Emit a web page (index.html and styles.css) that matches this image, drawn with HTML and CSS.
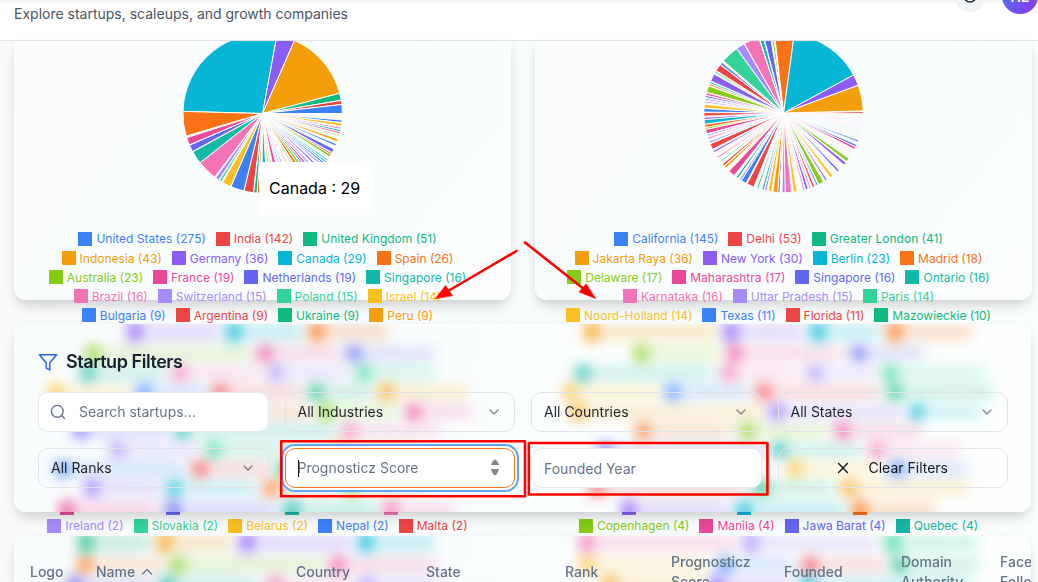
FILE: index.html
```html
<!DOCTYPE html>
<html lang="en">
<head>
<meta charset="utf-8">
<title>Startups</title>
<link rel="stylesheet" href="styles.css">
</head>
<body>
<header class="header">
  <p class="subtitle">Explore startups, scaleups, and growth companies</p>
  <div class="header-actions">
    <div class="round-button"><svg width="16" height="16" viewBox="0 0 16 16"><circle cx="8" cy="8" r="6" fill="none" stroke="#1f2937" stroke-width="1.6"/></svg></div>
    <div class="avatar">HE</div>
  </div>
</header>
<main class="main">
  <section class="charts">
    <article class="card chart-card">
      <svg class="pie" id="pie-countries" width="162" height="154" viewBox="182 41 162 154"></svg>
      <div class="tooltip">Canada : 29</div>
      <div class="legend" id="legend-countries"></div>
    </article>
    <article class="card chart-card">
      <svg class="pie" id="pie-states" width="162" height="154" viewBox="703 41 162 154"></svg>
      <div class="legend" id="legend-states"></div>
    </article>
  </section>
  <section class="card filters">
    <svg class="glass" id="glass-filters" width="1017" height="188" viewBox="14 324 1017 188"></svg>
    <h2 class="filters-title">
      <svg width="20" height="20" viewBox="0 0 20 20" fill="none" stroke="#2563eb" stroke-width="1.5" stroke-linejoin="round"><path d="M1.4 2.7h17.2l-6.8 8.1v7.1l-3.6-1.8v-5.3z"/></svg>
      <span>Startup Filters</span>
    </h2>
    <div class="filter-grid">
      <div class="field solid search">
        <svg width="16" height="16" viewBox="0 0 16 16" fill="none" stroke="#64748b" stroke-width="1.4" stroke-linecap="round"><circle cx="7.3" cy="7.3" r="5.9"/><path d="m11.6 11.6 2.9 2.9"/></svg>
        <span>Search startups...</span>
      </div>
      <div class="field"><span>All Industries</span><svg class="chevron" viewBox="0 0 16 16"><path d="m4 6 4 4 4-4"/></svg></div>
      <div class="field"><span>All Countries</span><svg class="chevron" viewBox="0 0 16 16"><path d="m4 6 4 4 4-4"/></svg></div>
      <div class="field"><span>All States</span><svg class="chevron" viewBox="0 0 16 16"><path d="m4 6 4 4 4-4"/></svg></div>
      <div class="field"><span>All Ranks</span><svg class="chevron" viewBox="0 0 16 16"><path d="m4 6 4 4 4-4"/></svg></div>
      <div class="field solid focused">
        <i class="caret"></i><span class="score">Prognosticz Score</span>
        <svg class="spinner" width="14" height="20" viewBox="0 0 14 20"><path fill="#858585" d="M7 1.300c1.700 1.200 3.400 3.200 4 5.700H3c.6-2.500 2.300-4.500 4-5.700zM3 11h8c-.6 2.900-2 4.700-3 6H6c-1-1.300-2.400-3.100-3-6z"/></svg>
      </div>
      <div class="field solid year"><span>Founded Year</span></div>
      <div class="field clear"><svg width="16" height="16" viewBox="0 0 16 16" fill="none" stroke="#111827" stroke-width="1.4" stroke-linecap="round"><path d="m3.600 3.600 8.800 8.800M12.400 3.600 3.600 12.400"/></svg><span>Clear Filters</span></div>
    </div>
  </section>
  <section class="card table-card">
    <svg class="glass" id="glass-table" width="1017" height="46" viewBox="14 536 1017 46"></svg>
    <div class="table-head">
      <div>Logo</div>
      <div>Name <svg width="12" height="12" viewBox="0 0 12 12" fill="none" stroke="#64748b" stroke-width="1.300" stroke-linecap="round" stroke-linejoin="round"><path d="m1.500 8 4.500-4.500L10.500 8"/></svg></div>
      <div>Country</div>
      <div>State</div>
      <div>Rank</div>
      <div>Prognosticz<br>Score</div>
      <div>Founded</div>
      <div>Domain<br>Authority</div>
      <div>Face<br>Follo</div>
    </div>
  </section>
</main>
<svg class="annotations" width="1038" height="582" viewBox="0 0 1038 582" fill="none" stroke="#ff0000" stroke-width="2.600" stroke-linejoin="round" stroke-linecap="round">
  <rect x="281.200" y="441.200" width="243.800" height="55"/>
  <rect x="528.800" y="443" width="238.600" height="51.500"/>
  <path d="M516.500 251 449 290.500M525 242.500 582 287.500"/>
  <path d="M435.500 298.500 445.500 285.500 452.500 295.500zM595.500 298.500 579 292 586 284z" fill="#ff0000" stroke-width=".6"/>
</svg>
<script src="script.js"></script>
</body>
</html>
```
FILE: styles.css
```css
* { box-sizing: border-box; }
html { overflow: hidden; }
body {
  margin: 0;
  width: 1038px;
  height: 582px;
  overflow: hidden;
  position: relative;
  font-family: Inter, "Liberation Sans", sans-serif;
  color: #1f2937;
  background: linear-gradient(90deg, #f8fafc 0%, #f9fcfc 55%, #fafefc 100%);
}
.header {
  height: 41px;
  background: linear-gradient(#f1f1f1, #ffffff 4px);
  border-bottom: 1px solid #e2e5e9;
  display: flex;
  justify-content: space-between;
  padding-left: 14px;
}
.subtitle {
  margin: 4px 0 0;
  font-size: 14px;
  line-height: 20px;
  color: #4b5563;
}
.header-actions { display: flex; gap: 16px; height: 36px; margin-top: -22px; }
.round-button {
  width: 32px; height: 32px; margin-top: 2px;
  border-radius: 50%;
  background: #f1f3f5;
  display: flex; align-items: center; justify-content: center;
}
.avatar {
  width: 36px; height: 36px;
  border-radius: 50%;
  background: linear-gradient(135deg, #3b82f6, #9333ea);
  color: #ffffff;
  font-size: 14px; font-weight: 600; line-height: 37px; text-align: center;
}
.main { padding: 0 7px 0 14px; }
.charts { display: grid; grid-template-columns: 497px 497px; grid-template-rows: 259px; gap: 24px; height: 259px; }
.card {
  position: relative;
  border-radius: 12px;
  background: linear-gradient(100deg, #f9fcfd, #fdfffe);
  box-shadow: 0 8px 14px -3px rgba(0, 0, 0, .16), 0 2px 10px rgba(0, 0, 0, .04);
}
.chart-card { border-radius: 0 0 12px 12px; background: linear-gradient(130deg, #fafbfd, #f9fdfd 60%, #fcfefe); }
.pie { display: block; margin-left: 168px; }
.tooltip {
  position: absolute;
  left: 245px; top: 121px;
  width: 111px; height: 53px;
  padding-left: 10px;
  background: #ffffff;
  color: #000000;
  font-size: 16px; line-height: 53px;
}
.legend { margin-top: 34.400px; width: 497px; margin-left: -5px; }
.legend-row { display: flex; justify-content: center; gap: 10px; height: 19.130px; align-items: center; }
.legend-item { display: flex; align-items: center; gap: 4px; font-size: 12px; line-height: 19px; white-space: nowrap; }
.swatch { width: 14px; height: 14px; background: currentColor; }
.legend-rest { display: block; margin-left: 5px; }
.glass { position: absolute; left: 0; top: 0; border-radius: inherit; overflow: hidden; }
.filters { height: 188px; margin-top: 24px; padding: 28px 24px 24px; }
.filters-title {
  position: relative;
  margin: 0 0 20px;
  height: 20px;
  display: flex; align-items: center; gap: 8px;
  font-size: 18px; font-weight: 600; letter-spacing: -.450px;
  color: #18212f;
}
.filters-title span { padding-bottom: 2px; }
.filter-grid { position: relative; display: grid; grid-template-columns: repeat(4, 1fr); gap: 16px; width: 970px; }
.field {
  height: 40px;
  border: 1px solid #e0e3ea;
  border-radius: 10px;
  padding: 0 12px;
  display: flex; align-items: center; justify-content: space-between;
  font-size: 14px;
  color: #1f2328;
}
.field span { padding-bottom: 2px; }
.solid { background: #ffffff; color: #64748b; border-color: #e2e8f0; justify-content: flex-start; }
.search { gap: 13px; padding-left: 11px; }
.chevron { width: 16px; height: 16px; fill: none; stroke: #7b8088; stroke-width: 1.300; stroke-linecap: round; stroke-linejoin: round; }
.focused { border-color: #f97316; box-shadow: 0 0 0 2px #ffffff, 0 0 0 4px #60a5fa; }
.caret { width: 1px; height: 17px; margin-right: -1px; background: #000000; }
.score { flex: 1; }
.year { padding-top: 2px; }
.clear { justify-content: center; gap: 17px; padding-right: 14px; color: #18181b; }
.table-card { height: 46px; margin-top: 24px; overflow: hidden; border-radius: 12px 12px 0 0; }
.table-head {
  position: relative;
  display: grid;
  grid-template-columns: 66px 200px 130px 139px 106px 113px 117px 99px 60px;
  align-items: center;
  height: 72px;
  padding-left: 16px;
  font-size: 14px; line-height: 20px; font-weight: 500; color: #64748b;
  white-space: nowrap;
}
.table-head svg { vertical-align: -1px; margin-left: 2px; }
.annotations { position: absolute; left: 0; top: 0; }
```
FILE: script.js
```js
const C = {
  blue: "#3b82f6", red: "#ef4444", green: "#10b981", amber: "#f59e0b",
  violet: "#8b5cf6", cyan: "#06b6d4", orange: "#f97316", lime: "#84cc16",
  pink: "#ec4899", indigo: "#6366f1", teal: "#14b8a6", rose: "#f472b6",
  lav: "#a78bfa", mint: "#34d399", gold: "#fbbf24"
};
const names = Object.keys(C);

/* Wide slices are [from, to, colour]; slivers are [middle, width, colour], clockwise from east. */
function drawPie(id, cx, cy, wide, thin, faint) {
  const r = 79.700;
  const pt = a => (cx + r * Math.cos(a * Math.PI / 180)).toFixed(2) + " " + (cy + r * Math.sin(a * Math.PI / 180)).toFixed(2);
  const wedge = (a, b, c, o, s) =>
    `<path d="M${cx} ${cy}L${pt(a)}A${r} ${r} 0 0 1 ${pt(b)}Z" fill="${C[c]}" opacity="${o}" stroke="#fff" stroke-width="${s}"/>`;
  let out = `<circle cx="${cx}" cy="${cy}" r="${r}" fill="#fff"/>`;
  faint.forEach(([from, to]) => {
    for (let a = from, i = 0; a < to; a += 1.3, i++) out += wedge(a, a + .5, names[(i * 4 + 3) % 15], .12, 0);
  });
  thin.forEach(([m, w, c]) => {
    out += wedge(m - w / 2 - .4, m + w / 2 + .4, c, 1, .9);
  });
  wide.forEach(([a, b, c]) => { out += wedge(a, b, c, 1, 1); });
  document.getElementById(id).innerHTML = out;
}
drawPie("pie-countries", 262.600, 113.500, [
  [181.500, 280.400, "cyan"], [280.400, 293.600, "violet"], [293.600, 345.300, "amber"], [345.300, 350.500, "green"],
  [350.500, 353.500, "red"], [353.500, 360, "blue"], [96.700, 103.600, "red"], [103.600, 113.500, "blue"],
  [113.500, 120.100, "gold"], [127, 141.800, "rose"], [141.800, 151.200, "teal"], [151.500, 156.500, "indigo"],
  [156.800, 162.300, "pink"], [163.600, 181.500, "orange"]
], [
  [5.600, 1, "blue"], [8, 1.500, "gold"], [10.700, .6, "rose"], [12.500, .8, "teal"], [14, .6, "pink"], [16, .2, "lime"],
  [19.700, 1.300, "amber"], [23.200, .8, "blue"], [27.900, 2.200, "indigo"], [30.500, .7, "pink"], [32, 1.200, "lime"],
  [35.800, .5, "mint"], [37.400, .4, "teal"], [39, .6, "blue"], [41, .6, "lav"], [44, .7, "indigo"], [47, .8, "lav"],
  [49.500, 1, "pink"], [51.500, .8, "blue"], [54, 1.500, "lime"], [56.800, 2, "orange"], [60, .6, "mint"],
  [64, .8, "gold"], [69, .8, "lav"], [72, .6, "blue"], [77, 3, "pink"], [81.800, .8, "lime"], [84, 1, "orange"],
  [88.500, 3, "cyan"], [93, 1, "orange"], [95.200, 1.500, "green"], [122, .9, "mint"], [124.700, 2, "lav"]
], [[1, 92]]);
drawPie("pie-states", 783.600, 113, [
  [263.400, 277.700, "orange"], [277.700, 331.500, "cyan"], [331.500, 339.600, "violet"], [339.600, 358.500, "amber"],
  [220.900, 233.900, "mint"], [234, 240.300, "lav"], [240.500, 251.700, "rose"], [252, 254.900, "teal"], [255.400, 260.200, "indigo"]
], [
  [359.700, .5, "red"], [20.600, .6, "blue"], [24.300, .9, "indigo"], [26.200, 1.100, "pink"], [36.200, 1.800, "lime"],
  [39.600, 1.500, "violet"], [46.700, .8, "indigo"], [53, 1.500, "gold"], [57.600, .6, "indigo"], [61.800, 3, "lime"],
  [65, .5, "blue"], [68, 1, "red"], [70.500, .5, "lav"], [73, 1.200, "violet"], [75.200, .5, "rose"], [81.600, 1.800, "gold"],
  [86.700, 4, "rose"], [90, 1.500, "lav"], [93.500, .8, "violet"], [96, 2.700, "amber"], [100, 1.800, "gold"],
  [103, .8, "lav"], [105, .8, "teal"], [109, .5, "green"], [114.600, 4.500, "red"], [120, 3, "blue"], [122.800, .6, "lav"],
  [125.700, .8, "green"], [130.700, 4, "pink"], [137, 1, "amber"], [139.300, .8, "red"], [142.500, .3, "mint"],
  [146, .4, "rose"], [151, .8, "violet"], [155, 3.500, "red"], [158.500, .4, "blue"], [161.500, .5, "rose"],
  [163.700, .4, "lav"], [166.500, 2.500, "pink"], [168.800, .6, "lime"], [170.700, 1.500, "orange"], [173.600, 2.500, "cyan"],
  [176.100, .8, "violet"], [179, 1.800, "red"], [182, 1.800, "blue"], [184.900, 2, "gold"], [188, .4, "lav"], [190, .3, "violet"],
  [192, .7, "indigo"], [193.800, .9, "pink"], [197.500, 4, "lime"], [201, .5, "orange"], [202.500, .5, "cyan"],
  [206.500, 4.700, "violet"], [211, .4, "mint"], [214.700, 4.300, "red"], [218.500, 1, "blue"], [261.800, .8, "lime"]
], [[1, 219]]);

const legendRow = items => `<div class="legend-row">${items.map(([t, c]) =>
  `<div class="legend-item" style="color:${C[c]}"><span class="swatch"></span><span>${t}</span></div>`).join("")}</div>`;

/* Each row: centre y, right end of the last label, then swatch centres with colours. */
const filterRows = [
  [334, 388, [135, "violet"], [234, "cyan"], [317, "orange"]],
  [353.500, 434, [93, "lime"], [265, "pink"], [354, "indigo"]],
  [373, 436, [88, "teal"], [180, "rose"], [276, "lav"], [364, "mint"]],
  [392, 468, [56, "gold"], [144, "blue"], [220, "red"], [316, "green"], [386, "amber"]],
  [412, 472, [60, "violet"], [150, "cyan"], [240, "orange"], [326, "lime"], [414, "pink"]],
  [431, 442, [81, "indigo"], [182, "teal"], [350, "rose"]],
  [450, 420, [118, "lav"], [214, "mint"], [338, "gold"]],
  [469, 440, [63, "blue"], [200, "red"], [285, "green"], [370, "amber"]],
  [488, 430, [92, "violet"], [174, "cyan"], [271, "orange"], [352, "lime"]],
  [508, 456, [67, "pink"], [173, "indigo"], [292, "teal"], [391, "rose"]],
  [334, 972, [592, "amber"], [731, "violet"], [818, "cyan"], [895, "orange"]],
  [353.500, 925, [641, "lime"], [735, "pink"], [859, "indigo"]],
  [373, 986, [583, "teal"], [729, "rose"], [815, "lav"], [890, "mint"]],
  [392, 994, [571, "gold"], [673, "blue"], [764, "red"], [895, "green"]],
  [412, 982, [578, "amber"], [777, "violet"], [917, "cyan"]],
  [431, 922, [643, "orange"], [747, "lime"], [843, "pink"]],
  [450, 962, [605, "indigo"], [780, "teal"], [877, "rose"]],
  [469, 968, [795, "gold"], [897, "blue"]],
  [488, 970, [597, "red"], [762, "green"], [849, "amber"]],
  [508, 936, [629, "violet"], [744, "cyan"], [860, "orange"]]
];
const tableRows = [
  [545, 435, [86, "green"], [165, "amber"], [247, "violet"], [366, "cyan"]],
  [565, 438, [85, "orange"], [178, "lime"], [338, "pink"]],
  [584, 440, [75, "indigo"], [168, "teal"], [275, "rose"], [367, "lav"]],
  [545, 978, [587, "rose"], [751, "lav"], [893, "mint"]],
  [565, 980, [587, "gold"], [725, "blue"], [810, "red"], [900, "green"]],
  [584, 970, [610, "amber"], [717, "violet"], [808, "cyan"]]
];

/* Legend entries seen through a frosted panel; rows at its edges bleed past them. */
function drawGlass(id, rows, top, bottom) {
  let out = "";
  rows.forEach(([y, end, ...items]) => {
    const up = y - top < 14 ? 5 : 0, down = bottom - y < 14 ? 8 : 0;
    items.forEach(([x, c], i) => {
      const next = i + 1 < items.length ? items[i + 1][0] - 15 : end;
      out += `<rect x="${x - 7}" y="${y - 7 - up}" width="14" height="${14 + up + down}" fill="${C[c]}"/>` +
        `<rect x="${x + 10}" y="${y - 6 - up}" width="${next - x - 10}" height="${12 + up + down}" fill="${C[c]}" opacity=".25"/>`;
    });
  });
  document.getElementById(id).innerHTML =
    `<defs><filter id="${id}-blur" filterUnits="userSpaceOnUse" x="-10" y="${top - 40}" width="1060" height="${bottom - top + 80}" color-interpolation-filters="sRGB"><feGaussianBlur stdDeviation="6.500"/></filter></defs>` +
    `<g filter="url(#${id}-blur)" opacity=".85">${out}</g>`;
}
drawGlass("glass-filters", filterRows, 324, 512);
drawGlass("glass-table", tableRows, 536, 591);

/* Bottom hidden row, whose swatches peek out under the filter panel. */
const hiddenRows = (left, items) =>
  `<svg class="legend-rest" width="497" height="191.300" viewBox="${left} 325.100 497 191.300">${items.map(([x, c]) =>
    `<rect x="${x - 7}" y="501" width="14" height="14" fill="${C[c]}"/>`).join("")}</svg>`;

document.getElementById("legend-countries").innerHTML =
  legendRow([["United States (275)", "blue"], ["India (142)", "red"], ["United Kingdom (51)", "green"]]) +
  legendRow([["Indonesia (43)", "amber"], ["Germany (36)", "violet"], ["Canada (29)", "cyan"], ["Spain (26)", "orange"]]) +
  legendRow([["Australia (23)", "lime"], ["France (19)", "pink"], ["Netherlands (19)", "indigo"], ["Singapore (16)", "teal"]]) +
  legendRow([["Brazil (16)", "rose"], ["Switzerland (15)", "lav"], ["Poland (15)", "mint"], ["Israel (14)", "gold"]]) +
  legendRow([["Bulgaria (9)", "blue"], ["Argentina (9)", "red"], ["Ukraine (9)", "green"], ["Peru (9)", "amber"]]) +
  hiddenRows(14, [[67, "pink"], [173, "indigo"], [292, "teal"], [391, "rose"]]) +
  legendRow([["Ireland (2)", "lav"], ["Slovakia (2)", "mint"], ["Belarus (2)", "gold"], ["Nepal (2)", "blue"], ["Malta (2)", "red"]]);

document.getElementById("legend-states").innerHTML =
  legendRow([["California (145)", "blue"], ["Delhi (53)", "red"], ["Greater London (41)", "green"]]) +
  legendRow([["Jakarta Raya (36)", "amber"], ["New York (30)", "violet"], ["Berlin (23)", "cyan"], ["Madrid (18)", "orange"]]) +
  legendRow([["Delaware (17)", "lime"], ["Maharashtra (17)", "pink"], ["Singapore (16)", "indigo"], ["Ontario (16)", "teal"]]) +
  legendRow([["Karnataka (16)", "rose"], ["Uttar Pradesh (15)", "lav"], ["Paris (14)", "mint"]]) +
  legendRow([["Noord-Holland (14)", "gold"], ["Texas (11)", "blue"], ["Florida (11)", "red"], ["Mazowieckie (10)", "green"]]) +
  hiddenRows(535, [[629, "violet"], [744, "cyan"], [860, "orange"]]) +
  legendRow([["Copenhagen (4)", "lime"], ["Manila (4)", "pink"], ["Jawa Barat (4)", "indigo"], ["Quebec (4)", "teal"]]);
```
